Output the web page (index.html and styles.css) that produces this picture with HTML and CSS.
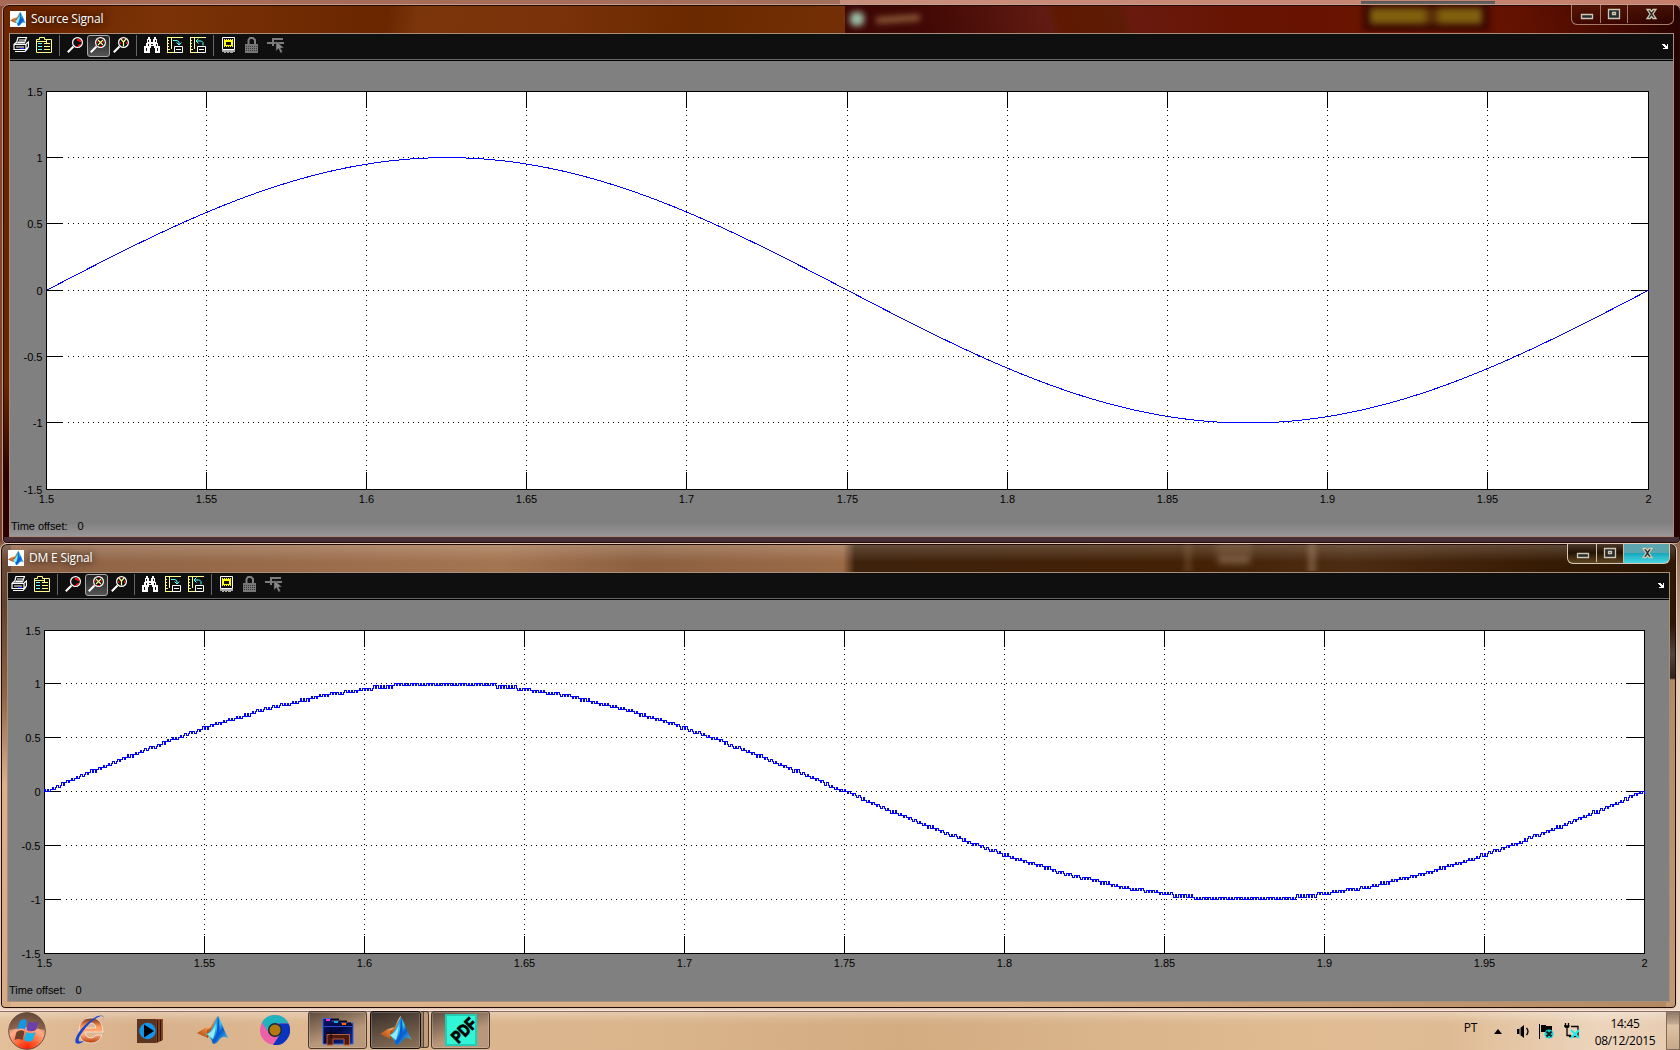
FILE: index.html
```html
<!DOCTYPE html>
<html lang="pt">
<head>
<meta charset="utf-8">
<title>Scopes</title>
<link rel="stylesheet" href="styles.css">
</head>
<body>
<svg class="defs" aria-hidden="true">
  <defs>
    <linearGradient id="blue" x1="0" y1="0" x2="1" y2="1"><stop offset="0" stop-color="#0a4ac8"/><stop offset=".45" stop-color="#35c8ee"/><stop offset=".6" stop-color="#075bd0"/><stop offset="1" stop-color="#5de3e0"/></linearGradient>
    <linearGradient id="copper" x1="0" y1="1" x2="1" y2="0"><stop offset="0" stop-color="#9e451a"/><stop offset=".6" stop-color="#e2792e"/><stop offset="1" stop-color="#ffd0a0"/></linearGradient>
    <radialGradient id="orb" cx=".5" cy="1" r=".95"><stop offset="0" stop-color="#ff1c00"/><stop offset=".35" stop-color="#ff6a3c"/><stop offset=".62" stop-color="#ffad88"/><stop offset="1" stop-color="#7c5945"/></radialGradient>
    <linearGradient id="ie" x1="0" y1="0" x2="0" y2="1"><stop offset="0" stop-color="#7a2e12"/><stop offset=".35" stop-color="#ff9c62"/><stop offset=".65" stop-color="#ffb080"/><stop offset="1" stop-color="#b63a05"/></linearGradient>
    <linearGradient id="folder" x1="0" y1="0" x2="1" y2="1"><stop offset="0" stop-color="#0a1670"/><stop offset=".5" stop-color="#02083c"/><stop offset="1" stop-color="#1030a8"/></linearGradient>
  </defs>
  <symbol id="matlab" viewBox="0 0 32 32">
    <path d="M0 19 8 14 15 12 11 24 6 22Z" fill="url(#copper)"/>
    <path d="M10 16C16 14 17 3 21 1L18 16 10 24Z" fill="url(#copper)"/>
    <path d="M9 20C16 19 17 6 21 2 25 8 27 18 32 25 28 22 25 22 22 26 20 29 18 30 16 30 15 27 13 22 9 20Z" fill="url(#blue)"/>
    <path d="M21 2C20 9 21 18 17 29 23 23 24 15 21 2Z" fill="#075ad0"/>
    <path d="M19 9C17 15 14 19 10 20L16 25C18 20 18 15 19 9Z" fill="#8eeef5"/>
  </symbol>
  <symbol id="printer" viewBox="0 0 16 16">
    <path d="M5 .5H13.5L11.5 6H3.500ZM6 3H12M5 5H11M1 7.500H13V12.500H1ZM13 7 15.500 5V10L13 12.500M1 7.500 3 5.500M3 10H11M2 14.500H12L15 11" fill="none" stroke="#fff" stroke-width="1.2"/>
    <path d="M7 11h4v1H7z" fill="#22f"/>
  </symbol>
  <symbol id="params" viewBox="0 0 16 16">
    <path d="M.5 2.500H3.500V.5H8.500V2.500H15.500V15.500H.5ZM.5 4.500H10" fill="none" stroke="#ffff8c"/>
    <path d="M2 6.500H6M2 9.500H6M2 12.500H6" stroke="#7ff" fill="none"/><path d="M8 6.500H14M8 9.500H14M8 12.500H14M10.500 2V6" stroke="#ffff8c" fill="none"/>
  </symbol>
  <symbol id="glass" viewBox="0 0 16 16">
    <circle cx="10.500" cy="5.500" r="4.900" fill="#0f0f0f" stroke="#fff" stroke-width="1.200"/>
    <path d="M6.500 9.500.8 15.200" stroke="#fff" stroke-width="2"/>
  </symbol>
  <symbol id="zoom" viewBox="0 0 16 16"><use href="#glass"/><path d="M10 2h3v1h1v2h-2v-1h-2zM12 7h2v1h-1v1h-2v-1h1zM9 9h2v1H9z" fill="#f00"/></symbol>
  <symbol id="zoomx" viewBox="0 0 16 16"><use href="#glass"/><path d="M10 1h1v1h-1zM7 4h1v2H7zM13 4h1v2h-1zM10 9h2v1h-2zM7 8h1v1H7z" fill="#f00"/><path d="M8 3 13 8M13 3 8 8" stroke="#ffff8c" stroke-width="1.100"/></symbol>
  <symbol id="zoomy" viewBox="0 0 16 16"><use href="#glass"/><path d="M10 1h1v1h-1zM7 5h1v2H7zM13 5h1v2h-1z" fill="#f00"/><path d="M8 2 10.500 5V9.500M13 2 10.500 5" stroke="#ffff8c" fill="none" stroke-width="1.200"/></symbol>
  <symbol id="binoc" viewBox="0 0 16 16">
    <path d="M4 0h2v2h1v3h2V2h1V0h2v2h1v4h1v3h2v7h-5v-5h-1V9H7v2H6v5H0V9h2V6h1V2h1z" fill="#fff"/>
    <path d="M4 3h1v2H4zM11 3h1v2h-1zM7 7h2v1H7zM4 7h1v2H4zM2 11h1v3H2zM12 7h1v2h-1zM13 11h1v3h-1z" fill="#111"/>
  </symbol>
  <symbol id="save" viewBox="0 0 16 16">
    <path d="M0 .5H16M.5 0V15.500M0 15.500H9M4.500 0V12M0 3.500H2M0 6.500H2M0 9.500H2M0 12.500H3" stroke="#ffff8c" fill="none"/>
    <path d="M7.500 9.500H15.500V15.500H7.500ZM9 12.500H14" stroke="#fff" fill="none"/>
  </symbol>
  <symbol id="savein" viewBox="0 0 16 16"><use href="#save"/><path d="M6 3.500H10L12 5V7M9.500 5.500 12 8 14.500 5.500" stroke="#5ff" fill="none"/></symbol>
  <symbol id="saveout" viewBox="0 0 16 16"><use href="#save"/><path d="M6 4H11.500L13 5.500V8.500M8.500 1.500 6 4 8.500 6.500" stroke="#5ff" fill="none"/></symbol>
  <symbol id="chip" viewBox="0 0 16 16">
    <path d="M1.500.5H13.500V12.500H1.500Z" fill="#111" stroke="#fff"/>
    <path d="M3 2h1v1h1V2h1v1h1V2h1v1h1V2h1v1h1V2h1v8h-1V9h-1v1H9V9H8v1H7V9H6v1H5V9H4v1H3z" fill="#ff0"/><path d="M5 5h5v3H5z" fill="#111"/>
    <path d="M1 13h13v2H1zM3 15h2v1H3zM6 15h2v1H6zM9 15h3v1H9z" fill="#aaa"/>
  </symbol>
  <symbol id="lock" viewBox="0 0 16 16">
    <path d="M4.500 7V3L6 1H9L11 3V7" fill="none" stroke="#808080" stroke-width="2"/><path d="M1 7h13v9H1z" fill="#777"/>
    <path d="M2 9.500H13M2 11.500H13M2 13.500H13" stroke="#383838" stroke-dasharray="1 1"/>
  </symbol>
  <symbol id="pick" viewBox="0 0 17 16">
    <path d="M0 5h5V1h11v2H7v2h10v2H7v2H5V7H0z" fill="#7c7c7c"/><path d="M9 4v10l2.500-2.500 2 4.500 2-1-2-4H17z" fill="#888" stroke="#222" stroke-width=".5"/>
  </symbol>
</svg>

<main class="desktop">
  <section class="window source">
    <header class="titlebar">
      <svg class="app-icon"><use href="#matlab"/></svg>
      <h1 class="title">Source Signal</h1>
      <div class="glow"><i class="spot"></i><i class="smear"></i><i class="amber"></i></div>
      <div class="controls">
        <svg width="102" height="19" viewBox="0 0 102 19"><path class="divide" d="M28.500 0V18M55.500 0V18"/><path class="glyph" d="M9.500 9.500h11v4h-11zM36.500 4.500h11v9h-11zM40.500 7.500h3v2h-3zM75 4.500h3l1.500 2 1.500-2h3l-3 4.500 3 4.500h-3l-1.500-2-1.500 2h-3l3-4.500z"/></svg>
      </div>
    </header>
    <div class="client">
      <div class="toolbar"></div>
      <svg class="plot" id="plot-source" width="1663" height="450"></svg>
      <footer class="status"><span>Time offset:</span><span>0</span></footer>
    </div>
  </section>

  <section class="window dm">
    <header class="titlebar">
      <svg class="app-icon"><use href="#matlab"/></svg>
      <h1 class="title">DM E Signal</h1>
      <div class="glow"><i class="beam"></i><i class="blur-label"></i><i class="beam second"></i></div>
      <div class="controls active">
        <svg width="102" height="19" viewBox="0 0 102 19"><path class="divide" d="M28.500 0V18M55.500 0V18"/><path class="glyph" d="M9.500 9.500h11v4h-11zM36.500 4.500h11v9h-11zM40.500 7.500h3v2h-3zM75 4.500h3l1.500 2 1.500-2h3l-3 4.500 3 4.500h-3l-1.500-2-1.500 2h-3l3-4.500z"/></svg>
      </div>
    </header>
    <div class="client">
      <div class="toolbar"></div>
      <svg class="plot" id="plot-dm" width="1661" height="375"></svg>
      <footer class="status"><span>Time offset:</span><span>0</span></footer>
    </div>
  </section>

  <nav class="taskbar">
    <svg class="orb" viewBox="0 0 40 40"><circle cx="20" cy="20" r="18.300" fill="url(#orb)" stroke="#6d5140"/><path d="M2.500 19A17.500 17.500 0 0 1 37.500 19Q20 14 2.500 19Z" fill="#5e4636" opacity=".65"/>
      <path d="M13 10Q16 7 20 9.500L18 18.500Q13.500 16.500 10 19Z" fill="#1595e6"/><path d="M21.500 10.500Q26 13 31.500 10.500L29 19Q24 21.500 19.500 19Z" fill="#6b3fb0"/><path d="M9.500 21Q13.500 18 17.500 20.500L15.500 29Q11.500 27 7.500 29Z" fill="#70402c"/><path d="M19 21Q23.500 23.500 28.500 21L26 29Q21.500 32 17 29Z" fill="#18b6e8"/></svg>
    <svg class="launch ie" viewBox="0 0 34 34"><path d="M31 19H13Q14 25 19 25 22 25 24 22H30Q27 30 19 30 7 30 7 18 7 5 19 5 31 5 31 19ZM13 15H24Q23 10 19 10 14 10 13 15Z" fill="url(#ie)" stroke="#fff" stroke-width=".6"/><path d="M31 8C34 1 27 1 19 7 8 15 1 27 4 30 6 32 10 30 13 27 6 31 5 27 9 21 15 12 24 4 29 3 32 3 32 5 31 8Z" fill="#1746d0"/></svg>
    <svg class="launch wmp" viewBox="0 0 26 26"><path d="M15 1H26V22L20 25H15Z" fill="#8a4826"/><path d="M20.500 2V24M23.500 2V23" stroke="#2c1208" stroke-width="1.300"/><path d="M0 1H19V25H0Z" fill="#5d341f"/><circle cx="10.500" cy="13" r="8.300" fill="#1494e8"/><path d="M7 6.500 17 13 7 19.500Z" fill="#000"/></svg>
    <svg class="launch ml"><use href="#matlab"/></svg>
    <svg class="launch chrome" viewBox="0 0 30 30"><circle cx="15" cy="15" r="15" fill="#ec5fa9"/><path d="M2 7.500A15 15 0 0 1 28.500 8.500H15L9 18Z" fill="#20b2bd"/><path d="M28.500 8.500A15 15 0 0 1 13 30L21 18 19 8.500Z" fill="#0934be"/><circle cx="15" cy="15" r="6.300" fill="#b4780e" stroke="#152b3c" stroke-width="1.500"/></svg>
    <div class="task explorer"><svg width="32" height="30" viewBox="0 0 32 30"><path d="M1 1.500H10V4H18L19 6H31V27H1Z" fill="url(#folder)" stroke="#3264d8"/><path d="M9 2.500H17M17 4.500H25M25 6.500H29" stroke="#02041c" stroke-width="2"/><path d="M4 2h4v2H4z" fill="#f3c"/><path d="M12 4h4v2h-4z" fill="#1ad"/><path d="M20 6h4v2h-4z" fill="#f61"/><path d="M2 9.500H30" stroke="#2750c8"/><path d="M5 28V17.500H27.500V28H22V22H11V28Z" fill="#4b1a0c" stroke="#b55b36"/><path d="M9 11V21M4 16H14" stroke="#090412"/></svg></div>
    <div class="task current"><svg width="32" height="32"><use href="#matlab"/></svg></div>
    <div class="stack"></div>
    <div class="task pdf"><span class="pdf-tile"><b>PDF</b></span></div>
    <div class="tray">
      <span class="lang">PT</span>
      <svg class="up" width="8" height="5"><path d="M0 5 4 0 8 5Z"/></svg>
      <svg class="speaker" width="14" height="15" viewBox="0 0 14 15"><path d="M0 5H2L7 1V14L2 10H0Z"/><path d="M9.500 4Q12.500 7.500 9.500 11" fill="none" stroke="#000" stroke-width="1.300"/><path d="M3 4V11" stroke="#e5cfb8"/></svg>
      <svg class="flag" width="17" height="17" viewBox="0 0 17 17"><path d="M1 1H2V16H1ZM3 2H8V3H14V9H3Z"/><circle cx="11" cy="11" r="4.500" fill="#0ad7dd"/><path d="M8.500 8.500 13.500 13.500M13.500 8.500 8.500 13.500" stroke="#022" stroke-width="2"/></svg>
      <svg class="net" width="17" height="17" viewBox="0 0 17 17"><path d="M1.500 0V4H4.500V0M0 3H5.500M3 4V12.500H7M7 3.500H14V13.500H5" fill="none" stroke="#000" stroke-width="1.300"/><path d="M7 7 15 15M15 7 7 15" stroke="#17f0f2" stroke-width="2"/></svg>
      <div class="clock"><span>14:45</span><span>08/12/2015</span></div>
      <div class="peek"></div>
    </div>
  </nav>
</main>
<script src="scopes.js"></script>
</body>
</html>
```

FILE: styles.css
```css
* { box-sizing: border-box; }
body { margin: 0; overflow: hidden; font-family: "Liberation Sans", Arial, sans-serif; }
.defs { position: absolute; width: 0; height: 0; }

.desktop {
  position: relative;
  width: 1680px;
  height: 1050px;
  overflow: hidden;
  background:
    linear-gradient(#555, #666) 1361px 1px / 134px 3px no-repeat,
    linear-gradient(90deg, #a66a56, #a36f5d 50%, #c98f7d 50%, #c57f6c) 0 0 / 100% 6px no-repeat,
    linear-gradient(#8e4b32, #79402b 540px, #8f6d55 545px, #e9cdb6 680px, #f0d8c5);
}

/* windows */
.window {
  position: absolute;
  display: flex;
  flex-direction: column;
  border: 1px solid #c79c8a;
  border-radius: 7px 7px 5px 5px;
  box-shadow: inset 0 0 0 1px #240b04;
  padding: 0 6px 6px;
}
.source {
  left: 2px; top: 4px; width: 1679px; height: 540px;
  background:
    linear-gradient(#4a3238, #412c35) 0 100% / 100% 6px no-repeat,
    linear-gradient(#0000 380px, #2b0002 470px) 0 0 / 8px 100% no-repeat,
    linear-gradient(100deg, #692500, #7b3206 160px, #692600 380px, #7b350a 410px, #793209 550px, #6b2900 680px, #733006 842px) 0 0 / 842px 29px no-repeat,
    linear-gradient(75deg, #3c0604 0, #410804 80px, #611b12 200px, #5f1902 210px, #5e1b05 270px, #691a0e 280px, #671403 380px, #6a1301 540px, #621100 660px, #400700 760px, #260200) 100% 0 / 835px 29px no-repeat,
    linear-gradient(90deg, #692500, #260200);
}
.dm {
  left: 0; top: 543px; width: 1677px; height: 466px;
  border-color: #e3cabb;
  background:
    linear-gradient(#fff3, #fff0 18px) 0 0 / 100% 18px no-repeat,
    linear-gradient(#6c4b36, #5f4431 60px, #8c6546 150px, #d9b089 240px, #d5ab83) 0 0 / 10px 100% no-repeat,
    linear-gradient(#2f1904, #2d1703 80px, #51453c 110px, #2d231d 134px, #b08c66 136px, #c19a74) 100% 0 / 10px 100% no-repeat,
    linear-gradient(90deg, #8d6245, #9a6c4b 300px, #a47551 500px, #8d6040 640px, #9b6b48 842px, #3e220c 854px, #442105 1200px, #4c2c12 1350px, #3c1e06 1500px, #261300) 0 0 / 100% 40px no-repeat,
    linear-gradient(90deg, #dcb48d, #d9b088 60%, #b18862);
}
.titlebar { display: flex; height: 28px; padding: 0 0 0 1px; }
.app-icon { flex: none; width: 16px; height: 16px; margin-top: 6px; background: #fff; }
.title {
  flex: none; width: 180px; margin: 6px 0 0 5px;
  font: 400 12px/16px "Open Sans", "Noto Sans", sans-serif;
  letter-spacing: -.2px; color: #fff;
  text-shadow: 0 0 6px #000a, 0 0 10px #0008;
}
.glow { display: flex; flex: 1; min-width: 0; height: 27px; overflow: hidden; }
.glow i { flex: none; filter: blur(3px); }
.spot { width: 14px; height: 14px; margin: 7px 0 0 639px; background: #9dc0a8; border-radius: 5px; }
.smear { width: 44px; height: 6px; margin: 11px 0 0 12px; background: #925f3c; transform: rotate(-4deg); }
.amber {
  width: 112px; height: 16px; margin: 3px 0 0 450px;
  background: linear-gradient(90deg, #80600f 54px, #5a3008 58px 66px, #80600f 70px);
  box-shadow: 0 0 0 7px #370700;
}
.beam { width: 4px; height: 30px; margin-left: 977px; background: #b4916f66; }
.blur-label { width: 32px; height: 8px; margin: 12px 0 0 28px; background: #b1967f77; box-shadow: 0 -11px 0 2px #a1836744; }
.beam.second { margin-left: 59px; width: 6px; background: #caa88877; }
.controls {
  flex: none; width: 103px; height: 20px;
  border: 1px solid #a87b67; border-top: 0; border-radius: 0 0 6px 6px;
  background: linear-gradient(#5a1d0c88, #32040088);
}
.controls svg { display: block; }
.divide { fill: none; stroke: #a87b67; }
.glyph { fill: #252b30; stroke: #d0c8ae; stroke-width: 1.300; fill-rule: evenodd; }
.controls.active {
  border-color: #d8c9b5;
  background: linear-gradient(#5ca5ae 0 45%, #16a9bf 50%, #4ad6e0) 100% 0 / 46px 100% no-repeat, linear-gradient(#4a382a, #231305 45%, #5e4622);
}
.active .divide { stroke: #d0bca2; }

.client {
  display: flex; flex: 1; flex-direction: column;
  border: 1px solid #a98e7c; background: #808080;
}
.toolbar {
  display: flex; flex: none; align-items: flex-start; height: 27px; padding: 1px 7px 0 3px;
  background: linear-gradient(#0f0f0f 25px, #666 25px 26px, #000 26px);
}
.tool { flex: none; width: 16px; height: 16px; margin: 2px 7px 0 0; }
.tool.held { width: 23px; height: 22px; margin: 0 3px 0 -3px; padding: 1px 3px 3px 2px; border: 1px solid #aaa; border-radius: 3px; background: linear-gradient(#222, #555); }
.tool.pick { width: 17px; }
.sep { flex: none; width: 1px; height: 21px; margin: 0 7px 0 0; background: #666; }
.dock { width: 8px; height: 8px; margin: 8px -3px 0 auto; }

.plot { display: block; flex: none; shape-rendering: crispEdges; font: 11px "Liberation Sans", Arial, sans-serif; }
.area { fill: #fff; stroke: #000; }
.ticks { fill: none; stroke: #000; }
.grid { fill: none; stroke: #000; stroke-dasharray: 1 4; }
.signal { fill: none; stroke: #00f; }
.y-label { text-anchor: end; }
.x-label { text-anchor: middle; }
.status { display: flex; flex: 1; gap: 10px; padding: 8px 1px 0; font: 11px/14px "Liberation Sans", Arial, sans-serif; letter-spacing: -.03px; }
.source .status { background: linear-gradient(#80808000 12px, #9a9799); }

/* taskbar */
.taskbar {
  position: absolute; inset: 1010px 0 0; display: flex; align-items: flex-start;
  border-top: 1px solid #f7e3dc; box-shadow: inset 0 1px #8b7166;
  background:
    linear-gradient(#fff5, #fff1 9px, #fff0 14px),
    linear-gradient(90deg, #e3c09a, #d8b18b 140px, #ddb891 300px, #dab48b 640px, #d3ac82 900px, #e0bb92 1300px, #dfbb94 1450px, #ecd5bc 1600px, #e7cbb0);
}
.orb { width: 40px; height: 40px; margin-left: 7px; }
.launch { flex: none; }
.ie { width: 34px; height: 34px; margin: 2px 0 0 25px; }
.wmp { width: 26px; height: 26px; margin: 7px 0 0 31px; }
.ml { width: 32px; height: 32px; margin: 3px 0 0 34px; }
.chrome { width: 30px; height: 30px; margin: 4px 0 0 31px; }
.task {
  display: flex; justify-content: center; align-items: flex-start; height: 38px;
  border: 1px solid #4a3a30; border-radius: 3px; box-shadow: inset 0 0 0 1px #fff3;
  background: linear-gradient(160deg, #5c4a3c, #907660 35%, #b8977a 60%, #b8977a);
}
.explorer { width: 59px; margin-left: 18px; padding-top: 5px; }
.current { width: 51px; margin-left: 3px; padding-top: 3px; border-color: #15100d; background: linear-gradient(165deg, #382e27, #5e4e40 45%, #8b7359); }
.stack { width: 8px; height: 37px; border: 1px solid #4a3a30; border-left: 0; border-radius: 0 3px 3px 0; background: linear-gradient(90deg, #9c7f65 2px, #57473a 2px 3px, #c09c7a 3px); }
.pdf { width: 59px; margin-left: 2px; padding-top: 2px; }
.pdf-tile { display: grid; place-items: center; width: 32px; height: 32px; background: #30f5d7; border: 2px solid #25ccb4; }
.pdf-tile b { font: 700 17px/17px "Liberation Sans", Arial, sans-serif; transform: rotate(-45deg) scaleX(.8); -webkit-text-stroke: 1px #000; }
.tray { display: flex; margin-left: auto; height: 100%; font: 12px/17px "Open Sans", "Noto Sans", sans-serif; letter-spacing: -.3px; }
.lang { margin: 8px 17px 0 0; }
.up { margin: 18px 15px 0 0; }
.speaker { margin: 13px 7px 0 0; }
.flag { margin: 12px 9px 0 0; }
.net { margin: 12px 13px 0 0; }
.clock { display: flex; flex-direction: column; align-items: center; width: 62px; margin: 4px 10px 0 0; }
.peek { width: 14px; border: 1px solid #806b5a; background: linear-gradient(#8f7865, #c4ab94 12px, #dfc3a6 13px, #c8a989); }
```

FILE: scopes.js
```js
const NS = "http://www.w3.org/2000/svg";

function add(parent, name, attrs, text) {
  const node = document.createElementNS(NS, name);
  for (const key in attrs) node.setAttribute(key, attrs[key]);
  if (text !== undefined) node.textContent = text;
  parent.appendChild(node);
  return node;
}

// Toolbar: same buttons on every scope, "|" is a separator.
const tools = ["printer", "params", "|", "zoom", "zoomx", "zoomy", "|", "binoc", "savein", "saveout", "|", "chip", "lock", "pick"];
document.querySelectorAll(".toolbar").forEach(bar => {
  tools.forEach(name => {
    if (name === "|") {
      const sep = document.createElement("span");
      sep.className = "sep";
      bar.appendChild(sep);
      return;
    }
    const icon = add(bar, "svg", { class: "tool " + name + (name === "zoomx" ? " held" : "") });
    add(icon, "use", { href: "#" + name });
  });
  const dock = add(bar, "svg", { class: "dock", viewBox: "0 0 8 8" });
  add(dock, "path", { d: "M1 1h3v1h1v1h1V1h1v5H2V5h2V4H3V3H2V2H1z", fill: "#fff" });
});

function drawAxes(svg, box) {
  const { left, top, right, bottom } = box;
  add(svg, "rect", { class: "area", x: left + .5, y: top + .5, width: right - left, height: bottom - top });
  let ticks = "", grid = "";
  for (let i = 0; i <= 10; i++) {
    const x = Math.floor(left + (right - left) * i / 10) + .5;
    if (i > 0 && i < 10) {
      ticks += `M${x} ${top}v17M${x} ${bottom}v-17`;
      grid += `M${x} ${top + 19}V${bottom - 17}`;
    }
    add(svg, "text", { class: "x-label", x, y: bottom + 14 }, String(+(1.5 + i * .05).toFixed(2)));
  }
  for (let i = 0; i <= 6; i++) {
    const y = Math.floor(top + (bottom - top) * i / 6) + .5;
    if (i > 0 && i < 6) {
      ticks += `M${left} ${y}h17M${right} ${y}h-17`;
      grid += `M${left + 22} ${y}H${right - 17}`;
    }
    add(svg, "text", { class: "y-label", x: left - 3.5, y: y + 4 }, String(1.5 - i * .5));
  }
  add(svg, "path", { class: "grid", d: grid });
  add(svg, "path", { class: "ticks", d: ticks });
}

// Pure sine, one period over the visible span.
const source = { left: 36, top: 30, right: 1638, bottom: 428 };
const sourceSvg = document.getElementById("plot-source");
drawAxes(sourceSvg, source);
let d = "";
for (let x = source.left; x <= source.right; x += 2) {
  const v = Math.sin((x - source.left) / (source.right - source.left) * 2 * Math.PI);
  d += (d ? "L" : "M") + (x + .5) + " " + (229.3 - v * (source.bottom - source.top) / 3).toFixed(2);
}
add(sourceSvg, "path", { class: "signal", d });

// Delta-modulated estimate: fixed step up or down at each sample.
const dm = { left: 36, top: 30, right: 1636, bottom: 353 };
const dmSvg = document.getElementById("plot-dm");
drawAxes(dmSvg, dm);
const samples = 1000, step = .02;
let level = 0;
d = `M${dm.left + .5} 191.5`;
for (let i = 0; i <= samples; i++) {
  const x = Math.floor(dm.left + (dm.right - dm.left) * i / samples) + .5;
  level += .999 * Math.sin(i / samples * 2 * Math.PI) >= level * step ? 1 : -1;
  const y = Math.floor(191.5 - level * step * (dm.bottom - dm.top) / 3) + .5;
  d += `H${x}V${y}`;
}
add(dmSvg, "path", { class: "signal", d });
```
